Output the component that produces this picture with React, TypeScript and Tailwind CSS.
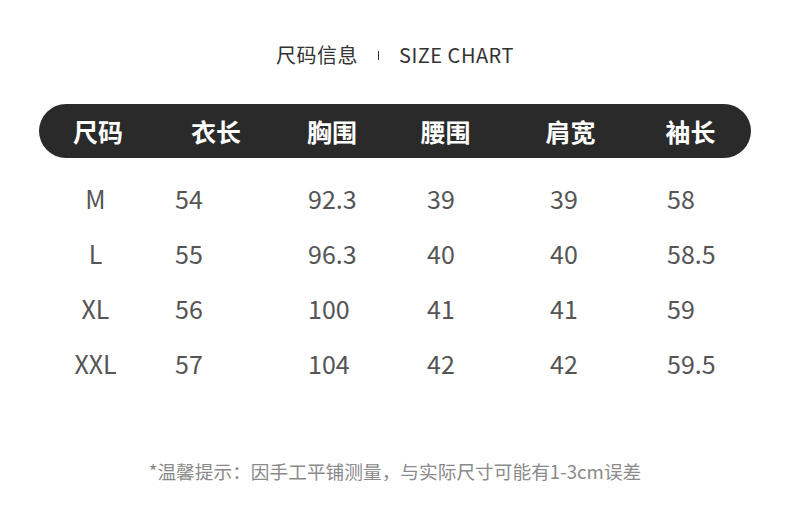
import React from "react";

const font = { fontFamily: '"Noto Sans CJK SC", "Noto Sans", sans-serif' };

const rows = [
  ["M", "54", "92.3", "39", "39", "58"],
  ["L", "55", "96.3", "40", "40", "58.5"],
  ["XL", "56", "100", "41", "41", "59"],
  ["XXL", "57", "104", "42", "42", "59.5"],
];

export default function App() {
  return (
    <div className="w-[790px] h-[531px] bg-white flex flex-col" style={font}>
      <div className="h-[36px]" />
      <div className="flex items-center justify-center h-[38px] text-[20px] text-[#333] leading-none">
        <span className="tracking-[0.5px]">尺码信息</span>
        <span className="mx-[20px] w-[1px] h-[9px] bg-[#333]" />
        <span className="tracking-[0.5px]">SIZE CHART</span>
      </div>
      <div className="h-[30px]" />
      <div className="mx-[39px] h-[54px] rounded-full bg-[#2a2a2a] flex items-center text-white text-[25px] font-bold leading-none">
        <div className="w-[118px] text-center">尺码</div>
        <div className="w-[118px] text-center">衣长</div>
        <div className="w-[114px] text-center">胸围</div>
        <div className="w-[113px] text-center">腰围</div>
        <div className="w-[137px] text-center">肩宽</div>
        <div className="w-[103px] text-center">袖长</div>
      </div>
      <div className="h-[13px]" />
      <div className="flex flex-col text-[25px] text-[#555] leading-none">
        {rows.map((r) => (
          <div key={r[0]} className="flex items-center h-[55px]">
            <div className="ml-[16px] w-[159px] text-center">{r[0]}</div>
            <div className="w-[133px]">{r[1]}</div>
            <div className="w-[119px]">{r[2]}</div>
            <div className="w-[123px]">{r[3]}</div>
            <div className="w-[117px]">{r[4]}</div>
            <div>{r[5]}</div>
          </div>
        ))}
      </div>
      <div className="h-[71px]" />
      <div className="text-center text-[18.7px] text-[#8a8a8a] leading-none">
        *温馨提示：因手工平铺测量，与实际尺寸可能有1-3cm误差
      </div>
    </div>
  );
}
